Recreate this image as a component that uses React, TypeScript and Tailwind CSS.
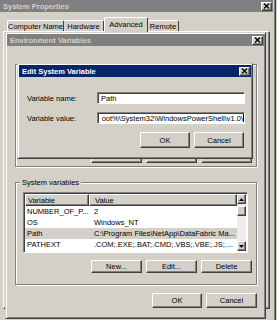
import React from "react";

const raised =
  "bg-[#d4d0c8] border border-t-white border-l-white border-r-[#404040] border-b-[#404040] shadow-[inset_-1px_-1px_#808080]";
const sunken =
  "border border-t-[#808080] border-l-[#808080] border-r-white border-b-white shadow-[inset_1px_1px_#404040]";
const frame =
  "bg-[#d4d0c8] border border-t-[#d4d0c8] border-l-[#d4d0c8] border-r-[#404040] border-b-[#404040] shadow-[inset_1px_1px_#fff,inset_-1px_-1px_#808080]";
const groupBox = "border border-[#808080] shadow-[inset_1px_1px_#fff,1px_1px_#fff]";

function CloseBtn() {
  return (
    <div className={`${raised} w-[11px] h-[9px] flex items-center justify-center`}>
      <svg width="7" height="6" viewBox="0 0 7 6">
        <path d="M1 0.5 L6 5.5 M6 0.5 L1 5.5" stroke="#000" strokeWidth="1.4" />
      </svg>
    </div>
  );
}

function Btn({ label, className }: { label: string; className: string }) {
  return <div className={`${raised} ${className} flex items-center justify-center`}>{label}</div>;
}

function TitleBar({ title, active }: { title: string; active?: boolean }) {
  return (
    <div
      className={`h-[12px] shrink-0 flex items-center justify-between pl-[3px] pr-[1px] font-bold ${
        active ? "bg-[#0a246a] text-white" : "bg-[#808080] text-[#d4d0c8]"
      }`}
    >
      <span>{title}</span>
      <CloseBtn />
    </div>
  );
}

const rows = [
  { name: "NUMBER_OF_P...", value: "2" },
  { name: "OS", value: "Windows_NT" },
  { name: "Path", value: "C:\\Program Files\\NetApp\\DataFabric Ma...", selected: true },
  { name: "PATHEXT", value: ".COM;.EXE;.BAT;.CMD;.VBS;.VBE;.JS;...." },
];

function Arrow({ up }: { up?: boolean }) {
  return (
    <div className={`${raised} h-[10px] shrink-0 flex items-center justify-center`}>
      <svg width="5" height="3" viewBox="0 0 5 3">
        <path d={up ? "M0 3 L2.5 0 L5 3 Z" : "M0 0 L2.5 3 L5 0 Z"} fill="#000" />
      </svg>
    </div>
  );
}

function ButtonRow() {
  return (
    <div className="flex justify-end gap-[4px]">
      <Btn label="New..." className="w-[51px] h-[13px]" />
      <Btn label="Edit..." className="w-[51px] h-[13px]" />
      <Btn label="Delete" className="w-[51px] h-[13px]" />
    </div>
  );
}

export default function App() {
  return (
    <div className="relative w-[277px] h-[320px] overflow-hidden whitespace-nowrap bg-[#d4d0c8] text-black text-[7.5px] leading-[9px] font-['Liberation_Sans',Arial,sans-serif]">
      {/* System Properties (inactive, behind) */}
      <div className={`absolute left-[-3px] top-[-3px] w-[279px] h-[345px] p-[2px] flex flex-col ${frame}`}>
        <TitleBar title="System Properties" />
        <div className="mt-[5px] h-[14px] flex items-end pl-[7px]">
          <div className="w-[57px] h-[11px] flex items-center justify-center border-t border-l border-r border-t-white border-l-white border-r-[#404040] rounded-t-[2px]">
            Computer Name
          </div>
          <div className="w-[40px] h-[11px] flex items-center justify-center border-t border-r border-t-white border-r-[#404040] rounded-t-[2px]">
            Hardware
          </div>
          <div className="relative z-10 -mb-px w-[44px] h-[15px] flex items-start pt-[2px] justify-center bg-[#d4d0c8] border-t border-l border-r border-t-white border-l-white border-r-[#404040] rounded-t-[2px]">
            Advanced
          </div>
          <div className="w-[31px] h-[11px] flex items-center justify-center border-t border-r border-t-white border-r-[#404040] rounded-t-[2px]">
            Remote
          </div>
        </div>
        <div className={`mx-[3px] h-[278px] ${raised}`} />
      </div>

      {/* Environment Variables (inactive) */}
      <div className={`absolute left-[5px] top-[32px] w-[261px] h-[287px] p-[1px] flex flex-col ${frame}`}>
        <TitleBar title="Environment Variables" />

        {/* user variables group, mostly hidden under the edit dialog */}
        <div className={`mt-[18px] ml-[8px] mr-[7px] h-[103px] flex flex-col justify-end pr-[4px] pb-[3px] ${groupBox}`}>
          <ButtonRow />
        </div>

        <div className={`relative mt-[15px] ml-[8px] mr-[7px] h-[103px] flex flex-col pl-[7px] pr-[4px] pt-[9px] ${groupBox}`}>
          <span className="absolute left-[4px] -top-[5px] px-[2px] bg-[#d4d0c8]">System variables</span>
          <div className={`w-[225px] h-[61px] bg-white flex overflow-hidden p-[1px] ${sunken}`}>
            <div className="flex-1 flex flex-col overflow-hidden">
              <div className="h-[12px] flex shrink-0">
                <div className={`${raised} w-[64px] pl-[2px] flex items-center`}>Variable</div>
                <div className={`${raised} flex-1 pl-[5px] flex items-center`}>Value</div>
              </div>
              {rows.map((r) => (
                <div
                  key={r.name}
                  className={`h-[11px] shrink-0 flex items-center ${r.selected ? "bg-[#d4d0c8]" : ""}`}
                >
                  <span className="w-[64px] pl-[2px] shrink-0">{r.name}</span>
                  <span className="pl-[5px]">{r.value}</span>
                </div>
              ))}
            </div>
            <div className="w-[9px] flex flex-col bg-[#eeede9]">
              <Arrow up />
              <div className={`${raised} h-[10px] mt-[2px] shrink-0`} />
              <div className="flex-1" />
              <Arrow />
            </div>
          </div>
          <div className="mt-[7px]">
            <ButtonRow />
          </div>
        </div>

        <div className="mt-[8px] mr-[7px] flex justify-end gap-[4px]">
          <Btn label="OK" className="w-[50px] h-[15px]" />
          <Btn label="Cancel" className="w-[51px] h-[15px]" />
        </div>
      </div>

      {/* Edit System Variable (active) */}
      <div className={`absolute left-[17px] top-[63px] w-[236px] h-[96px] p-[1px] flex flex-col ${frame}`}>
        <TitleBar title="Edit System Variable" active />
        <div className="mt-[15px] pl-[8px] flex items-center">
          <span className="w-[70px]">Variable name:</span>
          <div className={`w-[148px] h-[12px] bg-white pl-[3px] flex items-center ${sunken}`}>Path</div>
        </div>
        <div className="mt-[8px] pl-[8px] flex items-center">
          <span className="w-[70px]">Variable value:</span>
          <div className={`w-[148px] h-[12px] bg-white pr-0 flex items-center justify-end overflow-hidden ${sunken}`}>
            <span>oot%\System32\WindowsPowerShell\v1.0\</span>
            <span className="w-px h-[8px] bg-black shrink-0" />
          </div>
        </div>
        <div className="mt-[8px] pr-[7px] flex justify-end gap-[4px]">
          <Btn label="OK" className="w-[50px] h-[16px]" />
          <Btn label="Cancel" className="w-[50px] h-[16px]" />
        </div>
      </div>
    </div>
  );
}
